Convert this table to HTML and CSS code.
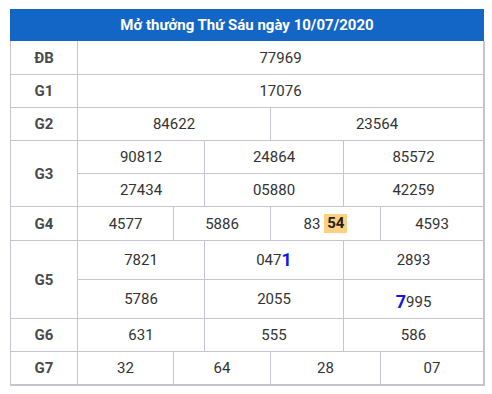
FILE: index.html
```html
<!DOCTYPE html>
<html lang="vi">
<head>
<meta charset="utf-8">
<link rel="stylesheet" href="styles.css">
</head>
<body>
<div class="result">
  <div class="title">Mở thưởng Thứ Sáu ngày 10/07/2020</div>
  <div class="grid">
    <div class="lbl">ĐB</div>
    <div class="c s-full">77969</div>

    <div class="lbl">G1</div>
    <div class="c s-full">17076</div>

    <div class="lbl">G2</div>
    <div class="c s-2-5">84622</div>
    <div class="c s-5-8">23564</div>

    <div class="lbl two">G3</div>
    <div class="c s-2-4">90812</div>
    <div class="c s-4-6">24864</div>
    <div class="c s-6-8">85572</div>
    <div class="c s-2-4">27434</div>
    <div class="c s-4-6">05880</div>
    <div class="c s-6-8">42259</div>

    <div class="lbl">G4</div>
    <div class="c s-2">4577</div>
    <div class="c s-3-5">5886</div>
    <div class="c s-5-7">83 <span class="hl">54</span></div>
    <div class="c s-7">4593</div>

    <div class="lbl two">G5</div>
    <div class="c s-2-4">7821</div>
    <div class="c s-4-6">047<span class="big">1</span></div>
    <div class="c s-6-8">2893</div>
    <div class="c s-2-4">5786</div>
    <div class="c s-4-6">2055</div>
    <div class="c s-6-8 low"><span class="big">7</span>995</div>

    <div class="lbl">G6</div>
    <div class="c s-2-4">631</div>
    <div class="c s-4-6">555</div>
    <div class="c s-6-8">586</div>

    <div class="lbl">G7</div>
    <div class="c s-2">32</div>
    <div class="c s-3-5">64</div>
    <div class="c s-5-7">28</div>
    <div class="c s-7">07</div>
  </div>
</div>
</body>
</html>
```

FILE: styles.css
```css
html, body {
  margin: 0;
  padding: 0;
  background: #ffffff;
}

body {
  font-family: Roboto, "Liberation Sans", Arial, sans-serif;
}

.result {
  width: 475px;
  margin: 9px 0 0 10px;
}

.title {
  height: 32px;
  line-height: 32px;
  background: #1466c6;
  color: #ffffff;
  font-weight: 700;
  font-size: 15px;
  text-align: center;
  margin-right: 1px;
}

.grid {
  display: grid;
  grid-template-columns: 66px 95px 30px 65px 72px 36px 102px;
  grid-template-rows: 33px 32px 32px 32px 32px 33px 38px 38px 32px 32px;
  gap: 1px;
  padding: 0 2px 2px 1px;
  background: #c5c5d1;
}

.grid > div {
  background: #ffffff;
  display: flex;
  align-items: center;
  justify-content: center;
  font-size: 15px;
  color: #333333;
  white-space: pre;
}

.grid > .lbl {
  grid-column: 1;
  font-weight: 700;
  color: #4a4a4a;
}

.grid > .lbl.two {
  grid-row: span 2;
}

.s-full { grid-column: 2 / 8; }
.s-2-5 { grid-column: 2 / 5; }
.s-5-8 { grid-column: 5 / 8; }
.s-2-4 { grid-column: 2 / 4; }
.s-4-6 { grid-column: 4 / 6; }
.s-6-8 { grid-column: 6 / 8; }
.s-2 { grid-column: 2; }
.s-3-5 { grid-column: 3 / 5; }
.s-5-7 { grid-column: 5 / 7; }
.s-7 { grid-column: 7; }

.hl {
  background: #fdd17f;
  font-weight: 700;
  color: #222222;
  padding: 0 3px;
  line-height: 19px;
}

.big {
  font-size: 18px;
  font-weight: 700;
  color: #1414f0;
  line-height: 1;
}

.grid > .low {
  padding-top: 6px;
}
```
